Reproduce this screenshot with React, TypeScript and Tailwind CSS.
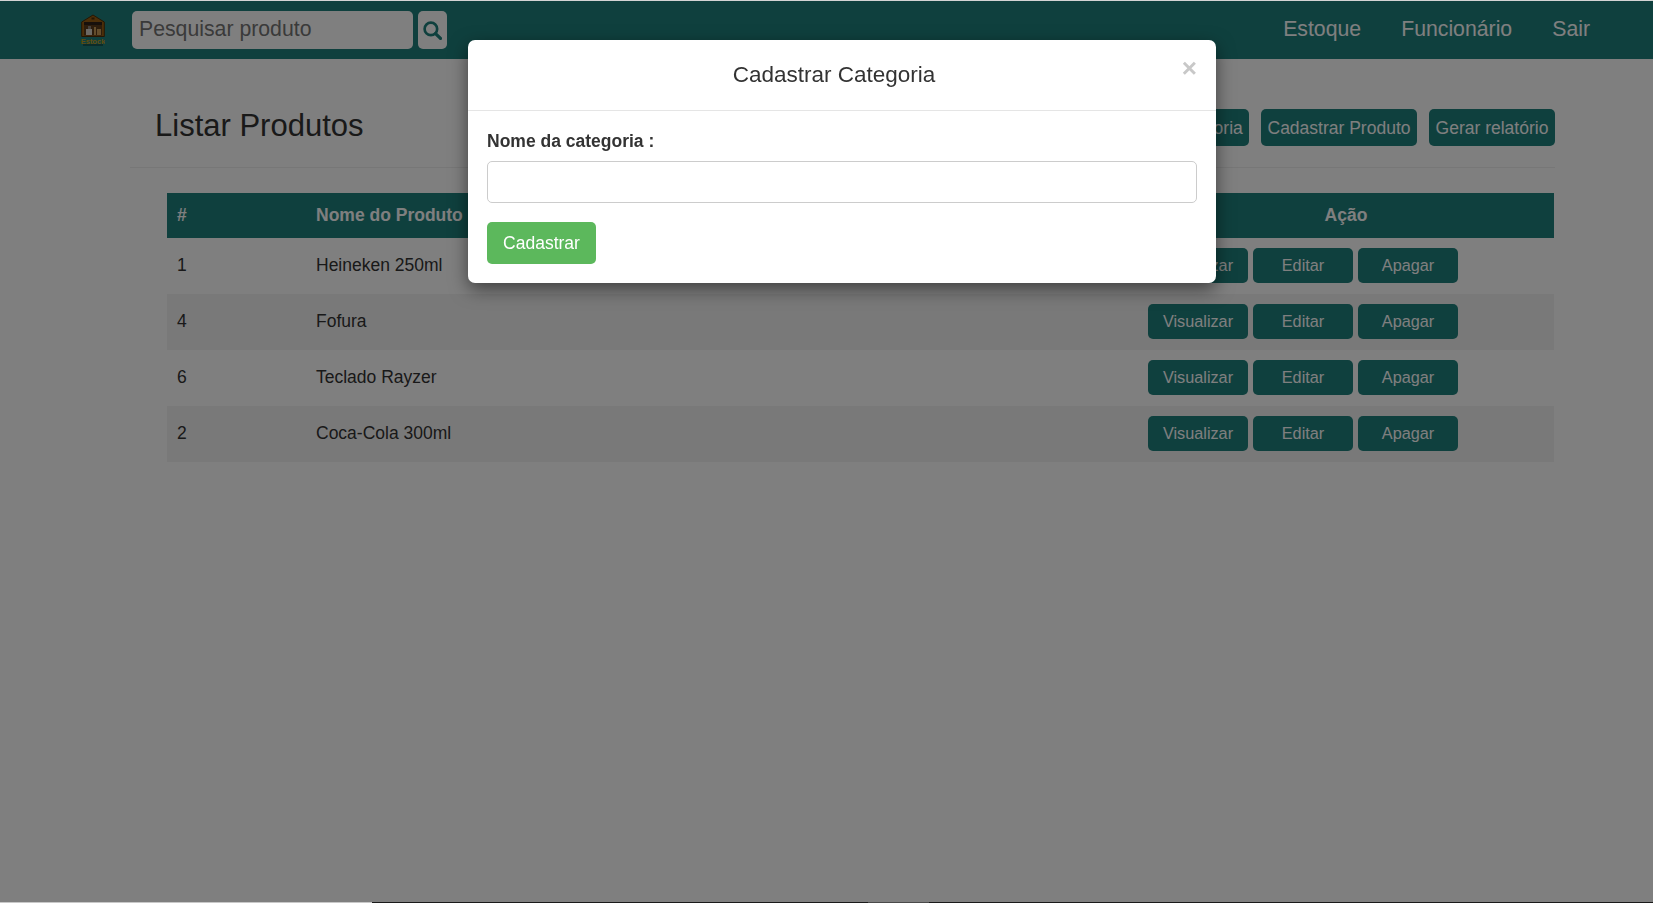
const produtos = [
  { id: 1, nome: "Heineken 250ml" },
  { id: 4, nome: "Fofura" },
  { id: 6, nome: "Teclado Rayzer" },
  { id: 2, nome: "Coca-Cola 300ml" },
];

function Logo() {
  return (
    <svg width="24" height="32" viewBox="0 0 24 32">
      <path d="M0.7 8 L12 1 L23.3 8 V22.5 H0.7 Z" fill="#9a5f12" stroke="#4a2c08" strokeWidth="1" />
      <rect x="3" y="8" width="18" height="13.5" fill="#5a3a1a" />
      <rect x="3" y="8" width="18" height="3" fill="#2e2018" />
      <rect x="5" y="15" width="6" height="6" fill="#d8d2c8" />
      <rect x="7" y="12" width="3" height="3" fill="#8a8078" />
      <rect x="13" y="13" width="2" height="8" fill="#c89a58" />
      <rect x="16" y="15" width="4" height="6" fill="#c89a58" />
      <rect x="10.5" y="3.5" width="3" height="2" fill="#4a2c08" />
      <text x="12" y="29.5" textAnchor="middle" fontSize="7.5" fontWeight="700" fill="#c29a1a">
        Estock
      </text>
      <rect x="2" y="30.5" width="20" height="1" fill="#0a3230" />
    </svg>
  );
}

export default function App() {
  return (
    <div className="relative min-h-[903px] bg-white pt-px font-['Liberation_Sans',Arial,sans-serif] text-[17.5px] text-[#333]">
      <nav className="flex h-[58px] items-center bg-[#1e807c] pl-[81px] pr-[63px]">
        <Logo />
        <div className="ml-[27px] flex h-[38px] w-[281px] items-center rounded-[5px] bg-white px-[7px] text-[21.25px] text-[#757575]">
          Pesquisar produto
        </div>
        <button className="ml-[5px] flex h-[38px] w-[29px] items-center justify-center rounded-[5px] bg-white pt-px text-[#1e807c]">
          <svg width="19" height="19" viewBox="0 0 20 20" fill="none" stroke="currentColor">
            <circle cx="8.3" cy="8.3" r="6.6" strokeWidth="2.8" />
            <path d="M13.2 13.2 L18.4 18.4" strokeWidth="3.4" strokeLinecap="round" />
          </svg>
        </button>
        <div className="ml-auto flex gap-[40px] text-[21.25px] text-white">
          <span>Estoque</span>
          <span>Funcionário</span>
          <span>Sair</span>
        </div>
      </nav>

      <main className="pl-[130px] pr-[98px]">
        <header className="mt-[50px] flex h-[59px] items-start justify-between border-b border-[#eee] pl-[25px]">
          <h2 className="text-[31px] leading-[33px]">Listar Produtos</h2>
          <div className="flex gap-3">
            <button className="h-[37px] w-[170px] rounded-[5px] bg-[#1e807c] pt-px text-white">Cadastrar Categoria</button>
            <button className="h-[37px] w-[156px] rounded-[5px] bg-[#1e807c] pt-px text-white">Cadastrar Produto</button>
            <button className="h-[37px] w-[126px] rounded-[5px] bg-[#1e807c] pt-px text-white">Gerar relatório</button>
          </div>
        </header>

        <table className="ml-[37px] mt-[25px] w-[1387px] table-fixed border-collapse">
          <thead>
            <tr className="h-[45px] bg-[#1e807c] text-left font-bold text-white">
              <th className="w-[149px] pl-[10px]">#</th>
              <th>Nome do Produto</th>
              <th className="w-[416px] text-center">Ação</th>
            </tr>
          </thead>
          <tbody>
            {produtos.map((p) => (
              <tr key={p.id} className="h-[56px] even:bg-[#f2f2f2]">
                <td className="pb-[2px] pl-[10px]">{p.id}</td>
                <td className="pb-[2px]">{p.nome}</td>
                <td className="pb-[2px]">
                  <div className="flex gap-[5px] pl-[10px] text-[16.25px]">
                    <button className="h-[35px] w-[100px] rounded-[5px] bg-[#1e807c] text-white">Visualizar</button>
                    <button className="h-[35px] w-[100px] rounded-[5px] bg-[#1e807c] text-white">Editar</button>
                    <button className="h-[35px] w-[100px] rounded-[5px] bg-[#1e807c] text-white">Apagar</button>
                  </div>
                </td>
              </tr>
            ))}
          </tbody>
        </table>
      </main>

      {/* modal backdrop */}
      <div className="fixed inset-0 bg-black/50" />

      <div className="absolute left-[468px] top-[40px] h-[243px] w-[748px] rounded-[7px] bg-white shadow-[0_6px_18px_rgba(0,0,0,0.5)]">
        <div className="relative flex h-[71px] items-center justify-center border-b border-[#e5e5e5] pr-[16px]">
          <h4 className="text-[22.5px]">Cadastrar Categoria</h4>
          <span className="absolute right-[19px] top-[9px] text-[26px] font-bold text-[#c8c8c8]">×</span>
        </div>
        <div className="px-[19px] pt-[17px]">
          <label className="block font-bold">Nome da categoria :</label>
          <div className="mt-[7px] h-[42px] rounded-[5px] border border-[#ccc] bg-white" />
          <button className="mt-[19px] h-[42px] w-[109px] rounded-[5px] bg-[#5cb85c] text-white">Cadastrar</button>
        </div>
      </div>

      {/* screen capture edges */}
      <div className="absolute inset-x-0 top-0 h-px bg-[#d4d4d4]" />
      <div className="absolute inset-x-0 bottom-0 flex h-px">
        <div className="w-[372px] bg-[#c8c8c8]" />
        <div className="w-[496px] bg-[#1a1a1a]" />
        <div className="w-[61px] bg-[#4a4a4a]" />
        <div className="flex-1 bg-[#1a1a1a]" />
      </div>
    </div>
  );
}
